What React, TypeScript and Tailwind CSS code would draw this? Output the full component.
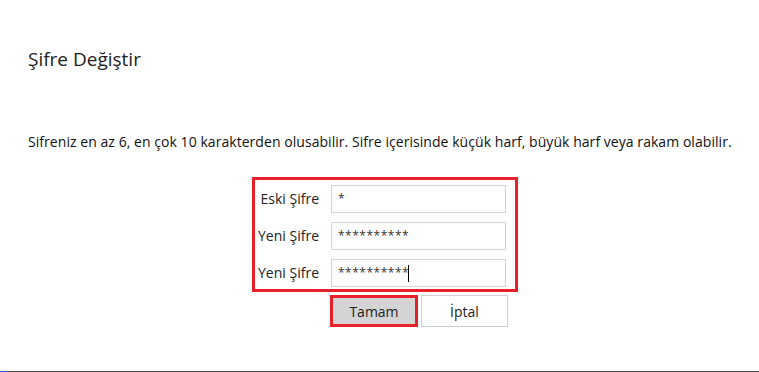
import React from "react";

const font = { fontFamily: '"Open Sans", "Noto Sans", Arial, sans-serif' };

function Field({ label, value, caret }: { label: string; value: string; caret?: boolean }) {
  return (
    <>
      <div className="text-right text-[14px] text-[#222] pr-[12px] leading-[28px] whitespace-nowrap">{label}</div>
      <div className="w-[175px] h-[28px] border border-[#d3d3d3] bg-white flex items-center pl-[6px] text-[12px] text-[#333] tracking-[0.5px]">
        <span>{value}</span>
        {caret && <span className="inline-block w-px h-[17px] bg-black ml-[-1px]" />}
      </div>
    </>
  );
}

export default function App() {
  return (
    <div className="w-[759px] h-[372px] bg-white relative overflow-hidden" style={font}>
      <div className="pl-[28px] pt-[48px]">
        <div className="text-[19px] text-[#222] leading-[22px]">Şifre Değiştir</div>
        <div className="mt-[63px] text-[14px] text-[#111] leading-[18px] whitespace-nowrap tracking-[0.05px]">
          Sifreniz en az 6, en çok 10 karakterden olusabilir. Sifre içerisinde küçük harf, büyük harf veya rakam olabilir.
        </div>
      </div>
      <div className="ml-[252px] mt-[26px]">
        <div className="w-[266px] h-[115px] border-[3px] border-[#e8202a] pt-[5px]">
          <div className="grid grid-cols-[76px_175px] gap-y-[9px]">
            <Field label="Eski Şifre" value="*" />
            <Field label="Yeni Şifre" value="**********" />
            <Field label="Yeni Şifre" value="**********" caret />
          </div>
        </div>
        <div className="flex gap-[3px] ml-[78px] mt-[3px]">
          <div className="w-[88px] h-[32px] border-[3px] border-[#e8202a] bg-[#d4d4d4] flex items-center justify-center text-[14px] text-[#222]">
            Tamam
          </div>
          <div className="w-[87px] h-[32px] border border-[#cfcfcf] bg-white flex items-center justify-center text-[14px] text-[#222]">
            İptal
          </div>
        </div>
      </div>
      <div className="absolute left-0 bottom-0 w-full h-px bg-[#4a4a4a]">
        <div className="w-[8px] h-px bg-[#2a5bd7]" />
      </div>
    </div>
  );
}
